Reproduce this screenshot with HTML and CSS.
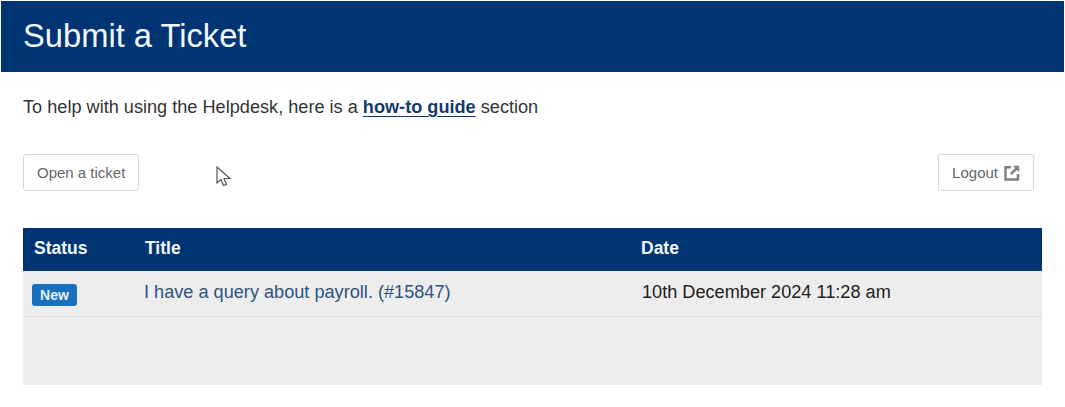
FILE: index.html
```html
<!DOCTYPE html>
<html lang="en">
<head>
<meta charset="utf-8">
<title>Submit a Ticket</title>
<link rel="stylesheet" href="styles.css">
</head>
<body>
<header class="banner"><h1>Submit a Ticket</h1></header>
<main class="content">
  <p class="intro">To help with using the Helpdesk, here is a <a href="#">how-to guide</a> section</p>
  <div class="actions">
    <a class="btn" href="#">Open a ticket</a>
    <a class="btn btn-logout" href="#">Logout
      <svg class="ext" width="16" height="16" viewBox="0 0 16 16" aria-hidden="true">
        <path d="M7 2.2H1.5V14.5H14V9" fill="none" stroke="#808080" stroke-width="2.4"/>
        <path d="M9 .8h6.2V7L13 4.9 7.8 10.1 5.9 8.2 11.1 3z" fill="#808080"/>
      </svg>
    </a>
  </div>
  <div class="tickets">
    <div class="row head">
      <div class="c-status">Status</div>
      <div class="c-title">Title</div>
      <div class="c-date">Date</div>
    </div>
    <div class="row item">
      <div class="c-status"><span class="badge">New</span></div>
      <div class="c-title"><a href="#">I have a query about payroll. (#15847)</a></div>
      <div class="c-date">10th December 2024 11:28 am</div>
    </div>
    <div class="filler"></div>
  </div>
</main>
<svg class="cursor" width="16" height="22" viewBox="0 0 16 22" aria-hidden="true">
  <path d="M1 1v16l4-3.5 2.5 6 3-1.3-2.6-5.7H14z" fill="#fff" stroke="#555" stroke-width="1.2"/>
</svg>
</body>
</html>
```
FILE: styles.css
```css
* { box-sizing: border-box; }
html, body { margin: 0; padding: 0; }
body {
  position: relative;
  width: 1065px;
  height: 407px;
  overflow: hidden;
  background: #fff;
  color: #333;
  font-family: "Liberation Sans", Arial, sans-serif;
  font-size: 18.15px;
  padding-top: 1px;
}
.banner {
  margin: 0 1px;
  height: 71px;
  background: #003473;
  display: flex;
  align-items: center;
  padding-left: 22px;
}
.banner h1 {
  margin: 0;
  color: #f3f8fc;
  font-size: 32.7px;
  font-weight: 400;
  line-height: 1;
}
.content { padding: 0 23px; }
.intro {
  margin: 0;
  padding-top: 24px;
  line-height: 22px;
}
.intro a {
  color: #123a6b;
  font-weight: 700;
  text-decoration: underline;
  text-underline-offset: 3px;
}
.actions {
  display: flex;
  justify-content: space-between;
  margin-top: 36px;
  padding-right: 8px;
}
.btn {
  display: flex;
  align-items: center;
  gap: 6px;
  height: 37px;
  padding: 0 13px;
  background: #fff;
  border: 1px solid #d6d6d6;
  border-radius: 3px;
  color: #666;
  font-size: 15px;
  text-decoration: none;
}
.tickets {
  margin-top: 37px;
  width: 1019px;
  background: #ededed;
}
.row { display: flex; align-items: center; }
.head {
  height: 43px;
  padding-bottom: 2px;
  background: #003473;
  color: #f3f6fa;
  font-size: 17.5px;
  font-weight: 700;
}
.item {
  height: 46px;
  padding-bottom: 2px;
  border-bottom: 1px solid #dfdfdf;
  color: #222;
}
.c-status { width: 122px; padding-left: 11px; }
.item .c-status { width: 121px; padding-left: 9px; padding-top: 4px; }
.c-title { width: 496px; }
.item .c-title { width: 497px; }
.c-date { flex: 1; }
.item .c-date { padding-left: 1px; }
.c-title a { color: #2c5480; text-decoration: none; }
.badge {
  display: inline-block;
  width: 45px;
  height: 22px;
  line-height: 22px;
  text-align: center;
  background: #1a70bd;
  color: #e8f2fa;
  border-radius: 3px;
  font-size: 14px;
  font-weight: 700;
}
.filler { height: 68px; }
.cursor { position: absolute; left: 216px; top: 166px; }
```
